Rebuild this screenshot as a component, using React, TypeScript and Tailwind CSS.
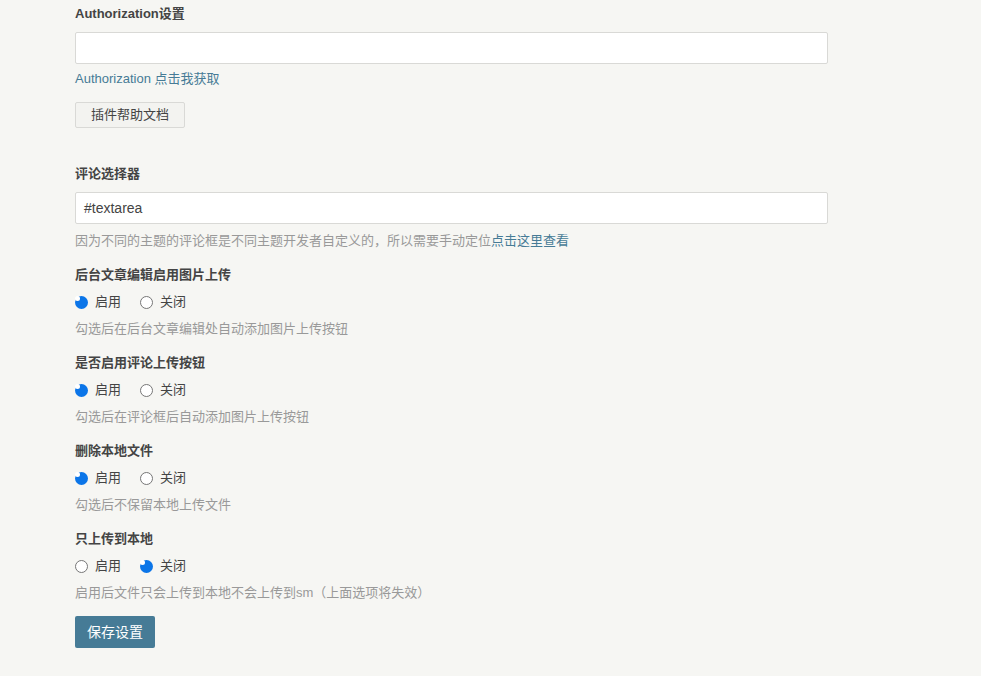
import React from "react";

const font = { fontFamily: '"Liberation Sans", "Noto Sans CJK SC", sans-serif' };

function Radio({ checked }: { checked: boolean }) {
  return checked ? (
    <span className="inline-block w-[13px] h-[13px] rounded-full bg-[#0b75e8] flex items-center justify-center">
      <span className="block w-[5px] h-[5px] rounded-full bg-white" />
    </span>
  ) : (
    <span className="inline-block w-[13px] h-[13px] rounded-full border border-[#767676] bg-white" />
  );
}

function Group({ label, on, desc }: { label: string; on: boolean; desc: string }) {
  return (
    <div className="flex flex-col">
      <div className="h-[18px] leading-[18px] font-bold text-[13px] text-[#444]">{label}</div>
      <div className="flex items-center h-[18px] mt-[9px] text-[13px] text-[#444]">
        <Radio checked={on} />
        <span className="ml-[7px]">启用</span>
        <span className="ml-[19px] flex items-center"><Radio checked={!on} /></span>
        <span className="ml-[7px]">关闭</span>
      </div>
      <div className="h-[18px] leading-[18px] mt-[9px] text-[13px] text-[#999]">{desc}</div>
    </div>
  );
}

export default function App() {
  return (
    <div className="w-[981px] h-[676px] bg-[#f6f6f3] overflow-hidden" style={font}>
      <div className="pl-[75px] pt-[5px] w-[828px] flex flex-col">
        <div className="h-[18px] leading-[18px] font-bold text-[13px] text-[#444]">Authorization设置</div>
        <div className="mt-[9px] h-[32px] bg-white border border-[#d9d9d6] rounded-[2px]" />
        <div className="mt-[6px] h-[18px] leading-[18px] text-[13px] text-[#467b96]">Authorization 点击我获取</div>
        <div className="mt-[14px]">
          <span className="inline-flex items-center justify-center w-[110px] h-[26px] border border-[#d9d9d6] bg-[#f3f3f0] rounded-[2px] text-[13px] text-[#444]">插件帮助文档</span>
        </div>
        <div className="mt-[37px] h-[18px] leading-[18px] font-bold text-[13px] text-[#444]">评论选择器</div>
        <div className="mt-[9px] h-[32px] bg-white border border-[#d9d9d6] rounded-[2px] flex items-center px-[8px] text-[14px] text-[#444]">#textarea</div>
        <div className="mt-[8px] h-[18px] leading-[18px] text-[13px] text-[#999]">
          因为不同的主题的评论框是不同主题开发者自定义的，所以需要手动定位<span className="text-[#467b96]">点击这里查看</span>
        </div>
        <div className="mt-[16px] flex flex-col gap-[16px]">
          <Group label="后台文章编辑启用图片上传" on desc="勾选后在后台文章编辑处自动添加图片上传按钮" />
          <Group label="是否启用评论上传按钮" on desc="勾选后在评论框后自动添加图片上传按钮" />
          <Group label="删除本地文件" on desc="勾选后不保留本地上传文件" />
          <Group label="只上传到本地" on={false} desc="启用后文件只会上传到本地不会上传到sm（上面选项将失效）" />
        </div>
        <div className="mt-[14px]">
          <span className="inline-flex items-center justify-center w-[80px] h-[32px] bg-[#467b96] rounded-[2px] text-[14px] text-white">保存设置</span>
        </div>
      </div>
    </div>
  );
}
